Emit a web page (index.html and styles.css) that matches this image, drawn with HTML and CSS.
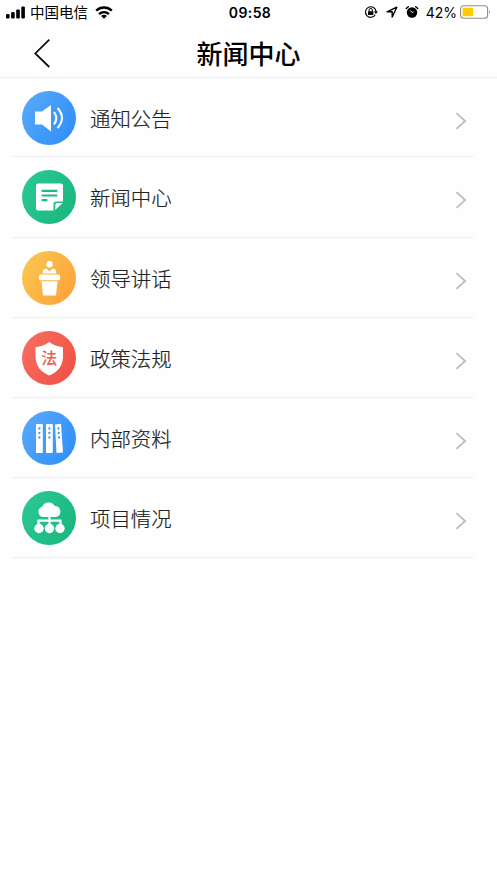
FILE: index.html
```html
<!DOCTYPE html>
<html lang="zh-CN">
<head>
<meta charset="utf-8">
<title>新闻中心</title>
<link rel="stylesheet" href="styles.css">
</head>
<body>
<div class="status">
  <div class="status-left">
    <svg class="signal" width="20" height="13" viewBox="0 0 20 13"><rect x="0" y="8" width="3.6" height="4.5" rx="1.2"/><rect x="5.1" y="6" width="3.6" height="6.5" rx="1.2"/><rect x="10.2" y="3.4" width="3.6" height="9.1" rx="1.2"/><rect x="15.3" y="0.5" width="3.6" height="12" rx="1.2"/></svg>
    <span class="carrier">中国电信</span>
    <svg class="wifi" width="18" height="13" viewBox="0 0 18 13"><g fill="none" stroke="#000" stroke-width="2.4"><path d="M1.2 4.7C5.6.5 12.4.5 16.8 4.7"/><path d="M4.1 8.1C6.9 5.5 11.1 5.5 13.9 8.1"/></g><path d="M6.1 9.9C7.7 8.5 10.3 8.5 11.9 9.9L9 12.7Z"/></svg>
  </div>
  <div class="clock">09:58</div>
  <div class="status-right">
    <svg width="14" height="14" viewBox="0 0 14 14"><path d="M11.3 9.8A5.3 5.3 0 1 1 12 6.2" fill="none" stroke="#000" stroke-width="1.1"/><path d="M9.9 6.3H14L11.9 9Z"/><rect x="4" y="6.2" width="5.4" height="3.8" rx=".6"/><path d="M5.1 6.500V5a1.6 1.6 0 0 1 3.2 0v1.500" fill="none" stroke="#000" stroke-width="1"/></svg>
    <svg class="arrow" width="12" height="12" viewBox="0 0 12 12"><path d="M1 5.8 10.8 1.2 6.2 11V5.8Z" fill="none" stroke="#000" stroke-width="1.4" stroke-linejoin="round"/></svg>
    <svg class="alarm" width="14" height="14" viewBox="0 0 14 14"><circle cx="7" cy="7.5" r="5.2"/><path d="M1.300 3.500 3.300 1.700M12.700 3.500 10.700 1.700" stroke="#000" stroke-width="1.500" stroke-linecap="round"/><path d="M5.200 5.400 7 7.500 8.600 6.800" fill="none" stroke="#fff" stroke-width=".9"/></svg>
    <span class="percent">42%</span>
    <svg class="battery" width="32" height="14" viewBox="0 0 32 14"><rect x=".6" y=".8" width="27" height="12.400" rx="3" fill="#fff" stroke="#8d8d8d" stroke-width="1.100"/><rect x="2.600" y="2.800" width="10.600" height="8.400" rx=".8" fill="#fc0"/><path d="M29.200 4.800q1.800 2.200 0 4.400Z" fill="#8d8d8d"/></svg>
  </div>
</div>
<header class="nav">
  <svg class="back" width="18" height="30" viewBox="0 0 18 30"><path d="M16.300 1.700 2.300 15.400 16.300 29" fill="none" stroke="#111" stroke-width="1.800"/></svg>
  <h1>新闻中心</h1>
</header>
<ul class="list">
  <li class="row">
    <span class="icon blue"><svg viewBox="0 0 54 54"><path d="M13 20.500h7L29 14v26.500L20 33.500H13Z" fill="#fff"/><path d="M32 21q4.600 6 0 12.500M35.500 17q9 10 0 20" fill="none" stroke="#fff" stroke-width="2"/></svg></span>
    <span class="label">通知公告</span>
    <svg class="chevron" viewBox="0 0 12 18"><path d="M1.400 1.200 10.200 9 1.400 16.800"/></svg>
  </li>
  <li class="row tall">
    <span class="icon green"><svg viewBox="0 0 54 54"><path fill-rule="evenodd" d="M16 13.500h23q2 0 2 2v16H34q-2.500 0-2.500 2.500v6.500H16q-2 0-2-2v-23q0-2 2-2ZM33.300 40v-5.300q0-1.700 1.700-1.700h5.500Z" fill="#fff"/><path d="M20.500 20.800h14M20.500 25.500h14M20.500 30.200h4" stroke="#1dbb84" stroke-width="2.200" stroke-linecap="round"/></svg></span>
    <span class="label">新闻中心</span>
    <svg class="chevron" viewBox="0 0 12 18"><path d="M1.400 1.200 10.200 9 1.400 16.800"/></svg>
  </li>
  <li class="row">
    <span class="icon orange"><svg viewBox="0 0 54 54"><g fill="#fff"><circle cx="27.500" cy="13.300" r="3.200"/><path d="M20.800 22.600v-2q0-2.700 3.700-3.200l3 3 3-3q3.700.5 3.700 3.200v2Z"/><rect x="17" y="23.600" width="21" height="5.600" rx="1.500"/><path d="M19.500 30.300h16L34 44.500H21Z"/></g></svg></span>
    <span class="label">领导讲话</span>
    <svg class="chevron" viewBox="0 0 12 18"><path d="M1.400 1.200 10.200 9 1.400 16.800"/></svg>
  </li>
  <li class="row">
    <span class="icon red"><svg viewBox="0 0 54 54"><path d="M27.300 11Q33 15.300 41 16.200V25Q41 39 27.300 44.500 13.500 39 13.500 25V16.200Q21.500 15.300 27.300 11Z" fill="#fff"/><text x="27.300" y="32.800" text-anchor="middle">法</text></svg></span>
    <span class="label">政策法规</span>
    <svg class="chevron" viewBox="0 0 12 18"><path d="M1.400 1.200 10.200 9 1.400 16.800"/></svg>
  </li>
  <li class="row">
    <span class="icon blue"><svg viewBox="0 0 54 54"><g fill="#fff"><rect x="14" y="13" width="6.800" height="29" rx=".7"/><rect x="24" y="13" width="6.800" height="29" rx=".7"/><path d="m33 13.500 6-.7 2 28.700-6.500.5Z"/></g><g fill="#3b97f9"><circle cx="17.400" cy="17.500" r="1.150"/><circle cx="17.400" cy="22" r="1.150"/><circle cx="17.400" cy="26.500" r="1.150"/><circle cx="27.400" cy="17.500" r="1.150"/><circle cx="27.400" cy="22" r="1.150"/><circle cx="27.400" cy="26.500" r="1.150"/><circle cx="36.400" cy="17.500" r="1.150"/><circle cx="36.700" cy="22" r="1.150"/><circle cx="37" cy="26.500" r="1.150"/></g></svg></span>
    <span class="label">内部资料</span>
    <svg class="chevron" viewBox="0 0 12 18"><path d="M1.400 1.200 10.200 9 1.400 16.800"/></svg>
  </li>
  <li class="row">
    <span class="icon green"><svg viewBox="0 0 54 54"><path d="M21.500 26a5.200 5.200 0 0 1-1.300-10.200 7 7 0 0 1 12.500-.8 5.600 5.600 0 0 1 1.500 11Z" fill="#fff"/><path d="M27.500 25v12M16.500 35v-5.300h22V35" fill="none" stroke="#fff" stroke-width="2.200"/><g fill="#fff"><circle cx="17" cy="37.500" r="4.700"/><circle cx="27.500" cy="37.500" r="4.700"/><circle cx="38" cy="37.500" r="4.700"/></g></svg></span>
    <span class="label">项目情况</span>
    <svg class="chevron" viewBox="0 0 12 18"><path d="M1.400 1.200 10.200 9 1.400 16.800"/></svg>
  </li>
</ul>
</body>
</html>
```
FILE: styles.css
```css
* { box-sizing: border-box; }
body {
  margin: 0;
  background: #fefefe;
  color: #000;
  font-family: Inter, "Noto Sans CJK SC", sans-serif;
}
svg { display: block; flex: none; }
.status {
  display: grid;
  grid-template-columns: 1fr auto 1fr;
  align-items: center;
  height: 25px;
  padding: 0 5px 0 6px;
}
.status-left, .status-right { display: flex; align-items: center; }
.status-right { justify-content: flex-end; padding-bottom: 1px; }
.carrier { font-size: 14.5px; line-height: 24px; margin-left: 4px; }
.wifi { margin-left: 7px; }
.clock { font-size: 14px; font-weight: 600; letter-spacing: .4px; padding-left: 2px; }
.arrow { margin-left: 8px; }
.alarm { margin-left: 7px; }
.percent { font-size: 14px; margin: 1px 0 0 7px; }
.battery { margin-left: 3px; }
.nav {
  display: grid;
  grid-template-columns: 60px 1fr 60px;
  align-items: center;
  height: 53px;
  padding-bottom: 1px;
  border-bottom: 1px solid #f0f0f0;
}
.back { margin-left: 33px; margin-top: 4px; }
.nav h1 {
  margin: 8px 0 0;
  text-align: center;
  font-size: 26px;
  line-height: 38px;
  font-weight: 500;
}
.list { list-style: none; margin: 0 23px 0 12px; padding: 0; }
.row {
  display: flex;
  align-items: flex-start;
  height: 80px;
  padding: 12.5px 7px 0 10px;
  border-bottom: 1px solid #f0f0f0;
}
.row:first-child { height: 79px; }
.row.tall { height: 81px; }
.icon { width: 54px; height: 54px; border-radius: 50%; flex: none; }
.icon svg { width: 54px; height: 54px; }
.icon text { font: 500 16px "Noto Sans CJK SC", sans-serif; fill: #f35b4f; }
.blue { background: linear-gradient(120deg, #5aaafa, #2c8df9); }
.green { background: linear-gradient(120deg, #2dc995, #17b67c); }
.orange { background: linear-gradient(120deg, #f9c952, #fd9f38); }
.red { background: linear-gradient(120deg, #fa6e61, #ef4f43); }
.label {
  flex: 1;
  margin-left: 14px;
  padding-top: 2px;
  color: #222;
  font-size: 20.4px;
  line-height: 54px;
  font-weight: 300;
  -webkit-text-stroke: .2px #222;
}
.chevron { width: 12px; height: 18px; margin-top: 21px; }
.chevron path { fill: none; stroke: #bebebe; stroke-width: 1.8; }
```
